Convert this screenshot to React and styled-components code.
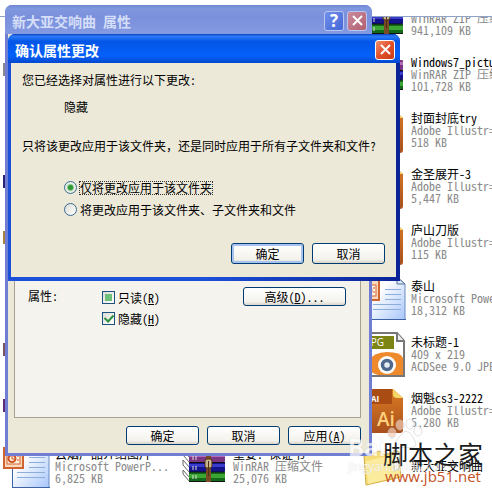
import React from "react";
import styled, { createGlobalStyle } from "styled-components";

const files = [
  { col: 3, row: 1, icon: "rar", name: "Windows7", meta: ["WinRAR ZIP 压缩文件", "941,109 KB"] },
  { col: 3, row: 2, icon: "rar", name: "Windows7_pictures", meta: ["WinRAR ZIP 压缩文件", "101,728 KB"] },
  { col: 3, row: 3, icon: "ai", name: "封面封底try", meta: ["Adobe Illustr=", "518 KB"] },
  { col: 3, row: 4, icon: "ai", name: "金圣展开-3", meta: ["Adobe Illustr=", "5,447 KB"] },
  { col: 3, row: 5, icon: "ai", name: "庐山刀版", meta: ["Adobe Illustr=", "115 KB"] },
  { col: 3, row: 6, icon: "ppt", name: "泰山", meta: ["Microsoft PowerP...", "18,312 KB"] },
  { col: 3, row: 7, icon: "jpg", name: "未标题-1", meta: ["409 x 219", "ACDSee 9.0 JPEG"] },
  { col: 3, row: 8, icon: "ai", name: "烟魁cs3-2222", meta: ["Adobe Illustr=", "5,280 KB"] },
  { col: 3, row: 9, icon: "folder", name: "新大亚交响曲", meta: [] },
  { col: 1, row: 9, icon: "ppt", name: "云烟产品介绍图片", meta: ["Microsoft PowerP...", "6,825 KB"] },
  { col: 2, row: 9, icon: "rar", name: "重要: 保证书", meta: ["WinRAR 压缩文件", "25,076 KB"] },
  { col: 1, row: 2, icon: "badge", color: "#8b8790" },
  { col: 1, row: 4, icon: "badge", color: "#2b2474" },
  { col: 1, row: 5, icon: "badge", color: "#a98242" },
  { col: 1, row: 7, icon: "badge", color: "#7d5560" },
  { col: 1, row: 8, icon: "badge", color: "#5c2a78" },
];

const RarIcon = () => (
  <svg width="48" height="48" viewBox="0 0 48 48">
    <path d="M2 6l7 8v5l-7-8zM2 16l7 8v5l-7-8zM2 26l7 8v4l-7-8z" fill="#fff" stroke="#666" />
    <rect x="8" y="8" width="36" height="10" rx="1" fill="#7d3482" />
    <rect x="8" y="10" width="36" height="3" fill="#b36db8" />
    <rect x="8" y="18" width="36" height="10" rx="1" fill="#12128c" />
    <rect x="8" y="20" width="36" height="3" fill="#3c3ccc" />
    <rect x="8" y="28" width="36" height="10" rx="1" fill="#126a1a" />
    <rect x="8" y="30" width="36" height="4" fill="#3da534" />
    <path d="M8 18.500h36M8 28h36M8 37.500h36" stroke="#111" />
    <path d="M12 12v4M15 12v4M12 22v4M15 22v4M12 31v4M15 31v4" stroke="#ddd" />
    <rect x="25" y="8" width="5" height="30" fill="#7a4a25" />
    <rect x="24" y="15" width="7" height="9" rx="2" fill="#c9b68c" stroke="#4c2c14" />
    <path d="M27.500 17v15" stroke="#513018" />
  </svg>
);

const AiIcon = () => (
  <svg width="48" height="48" viewBox="0 0 48 48">
    <defs>
      <linearGradient id="ai" x1="0" y1="0" x2="0" y2="1">
        <stop offset="0" stopColor="#dc7b22" />
        <stop offset="1" stopColor="#a8501e" />
      </linearGradient>
    </defs>
    <path d="M8 4q0-3 3-3h23l10 9v32q0 3-3 3H11q-3 0-3-3z" fill="url(#ai)" />
    <path d="M8 4q0-3 3-3h22v15H8z" fill="#a84c14" />
    <path d="M34 1l10 9h-6q-4 0-4-4z" fill="#f4d668" />
    <text x="12" y="14" fontSize="8" fontWeight="700" fill="#fff" fontFamily="Open Sans, sans-serif">AI</text>
    <text x="18" y="38" fontSize="19" fontWeight="600" fill="#ffd37c" fontFamily="Open Sans, sans-serif">Ai</text>
  </svg>
);

const PptIcon = () => (
  <svg width="48" height="48" viewBox="0 0 48 48">
    <defs>
      <linearGradient id="ppt" x1="0" y1="0" x2="1" y2="1">
        <stop offset="0.300" stopColor="#fff" />
        <stop offset="1" stopColor="#a8c7fa" />
      </linearGradient>
    </defs>
    <path d="M10 1h28l8 7v35H10z" fill="url(#ppt)" />
    <path d="M10 1h28l8 7v35" fill="none" stroke="#6a8bc4" />
    <path d="M9.500 23v20M9 43.500h38" stroke="#3e62a8" />
    <path d="M38 1v7h8z" fill="#dce9fb" stroke="#55719c" />
    <path d="M26 13.500h16M26 18.500h16M26 23.500h16M14 28.500h28M14 33.500h28" stroke="#8badd8" />
    <rect x="1" y="4" width="19" height="20" fill="#fbd9bd" stroke="#cf6430" strokeWidth="2" />
    <rect x="4" y="9" width="13" height="11" fill="#fff2e4" stroke="#cf6430" />
    <circle cx="9" cy="14.500" r="3.500" fill="none" stroke="#cf5420" strokeWidth="2" />
    <path d="M9 11v4h4M15 11v2M15 15v2" stroke="#cf5420" fill="none" />
  </svg>
);

const JpgIcon = () => (
  <svg width="48" height="48" viewBox="0 0 48 48">
    <path d="M8 1h30l7 8v35H8z" fill="#fff" stroke="#777" strokeWidth="2" />
    <path d="M38 1v8h7" fill="#eee" stroke="#777" strokeWidth="2" />
    <rect x="9" y="4" width="26" height="13" fill="#7c8414" />
    <text x="9" y="14" fontSize="10" fill="#fff" fontFamily="Open Sans, sans-serif">JPG</text>
    <path d="M9 30q5-10 19-10t16 6v17H19q-8-2-10-8z" fill="#ee8a2c" />
    <circle cx="28" cy="33" r="9" fill="#fff" />
    <circle cx="28" cy="33" r="4.500" fill="#e8eef6" stroke="#50688c" strokeWidth="3.500" />
  </svg>
);

const FolderIcon = () => (
  <svg width="48" height="48" viewBox="0 0 48 48">
    <path d="M5 12l16-5 4 4 14-4 3 26-35 8z" fill="#f7dc74" stroke="#d3ae45" />
    <path d="M7 17l32-7 2 22-32 8z" fill="#fbeb9c" />
    <path d="M35 6l6 3-1 16-5 2z" fill="#faf8e8" stroke="#b7b294" />
  </svg>
);

const BadgeIcon = ({ color }) => (
  <svg width="48" height="48" viewBox="0 0 48 48">
    <rect y="11" width="14" height="13" fill={color} />
  </svg>
);

const icons = { rar: RarIcon, ai: AiIcon, ppt: PptIcon, jpg: JpgIcon, folder: FolderIcon, badge: BadgeIcon };

const CloseMark = () => (
  <svg width="13" height="13" viewBox="0 0 13 13">
    <path d="M2 2l9 9M11 2l-9 9" stroke="#fff" strokeWidth="2" />
  </svg>
);

const App = () => {
  return (
    <>
      <GlobalStyle />
      <Desktop>
        <Explorer>
          <FileGrid>
            {files.map((file) => {
              const Icon = icons[file.icon];
              return (
                <Tile key={`${file.col}-${file.row}`} $col={file.col} $row={file.row}>
                  <Icon color={file.color} />
                  {file.name && (
                    <TileText>
                      <FileName>{file.name}</FileName>
                      {file.meta.map((line) => (
                        <FileMeta key={line}>{line}</FileMeta>
                      ))}
                    </TileText>
                  )}
                </Tile>
              );
            })}
          </FileGrid>
        </Explorer>

        <PropertiesWindow>
          <TitleBar $inactive>
            <Title $inactive>新大亚交响曲 属性</Title>
            <TitleButton $inactive $help aria-label="帮助">
              ?
            </TitleButton>
            <TitleButton $inactive aria-label="关闭">
              <CloseMark />
            </TitleButton>
          </TitleBar>
          <PropertiesBody>
            <TabPanel>
              <Attributes>
                <span>属性:</span>
                <Checks>
                  <Option>
                    <Checkbox type="checkbox" $mixed />
                    <span>
                      只读(<u>R</u>)
                    </span>
                  </Option>
                  <Option>
                    <Checkbox type="checkbox" defaultChecked />
                    <span>
                      隐藏(<u>H</u>)
                    </span>
                  </Option>
                </Checks>
                <Button $wide>
                  高级(<u>D</u>)...
                </Button>
              </Attributes>
            </TabPanel>
            <Buttons>
              <Button>确定</Button>
              <Button>取消</Button>
              <Button>
                应用(<u>A</u>)
              </Button>
            </Buttons>
          </PropertiesBody>
        </PropertiesWindow>

        <ConfirmWindow>
          <TitleBar>
            <Title>确认属性更改</Title>
            <TitleButton aria-label="关闭">
              <CloseMark />
            </TitleButton>
          </TitleBar>
          <ConfirmBody>
            <Message>您已经选择对属性进行以下更改:</Message>
            <Change>隐藏</Change>
            <Message>只将该更改应用于该文件夹，还是同时应用于所有子文件夹和文件?</Message>
            <Radios>
              <Option>
                <Radio type="radio" name="scope" defaultChecked />
                <Focused>仅将更改应用于该文件夹</Focused>
              </Option>
              <Option>
                <Radio type="radio" name="scope" />
                <span>将更改应用于该文件夹、子文件夹和文件</span>
              </Option>
            </Radios>
            <Buttons $tall>
              <Button $primary>确定</Button>
              <Button>取消</Button>
            </Buttons>
          </ConfirmBody>
        </ConfirmWindow>

        <BaiduMark>
          <svg width="40" height="36" viewBox="0 0 40 36">
            <g fill="#fff" stroke="#d8d4d8">
              <ellipse cx="7" cy="18" rx="4" ry="5" fill="#f3cdb8" />
              <ellipse cx="15" cy="10" rx="4" ry="5" fill="#f3cdb8" />
              <ellipse cx="25" cy="9" rx="4" ry="5" />
              <ellipse cx="33" cy="16" rx="4" ry="5" />
              <path d="M20 16q5 0 8 6t3 8q-3 4-11 2-8 2-10-2 0-4 4-8t6-6z" />
            </g>
          </svg>
          <BaiduName>Bai</BaiduName>
          <BaiduSite>jingyan.baidu.com</BaiduSite>
        </BaiduMark>
        <SiteMark>
          <SiteName>脚本之家</SiteName>
          <SiteLink href="#">www.jb51.net</SiteLink>
        </SiteMark>
      </Desktop>
    </>
  );
};

const GlobalStyle = createGlobalStyle`
  * {
    box-sizing: border-box;
  }

  body {
    margin: 0;
    background: #fff;
    font-family: "Noto Sans Mono CJK SC", "Noto Sans CJK SC", sans-serif;
    font-size: 12px;
    line-height: 12px;
    color: #000;
  }
`;

const Desktop = styled.main`
  position: relative;
  height: 100vh;
  overflow: hidden;
`;

const Explorer = styled.section`
  margin-top: 16px;
  border-top: 1px solid #8fa3c8;
  overflow: hidden;
`;

const FileGrid = styled.div`
  display: grid;
  grid-template-columns: repeat(3, 178px);
  grid-auto-rows: 56px;
  margin: -21px 0 0 3px;
`;

const Tile = styled.div`
  grid-column: ${(props) => props.$col};
  grid-row: ${(props) => props.$row};
  display: flex;
  align-items: flex-start;
  gap: 4px;
  min-width: 0;

  svg {
    flex: none;
  }
`;

const TileText = styled.div`
  display: flex;
  flex-direction: column;
  justify-content: center;
  height: 44px;
  white-space: nowrap;
`;

const FileName = styled.div`
  color: #000;
`;

const FileMeta = styled.div`
  color: #8a8a8a;
`;

const Window = styled.section`
  position: absolute;
  display: flex;
  flex-direction: column;
  border-radius: 7px 7px 0 0;
`;

const PropertiesWindow = styled(Window)`
  top: 5px;
  left: 5px;
  right: 120px;
  background: #6f7ed2;
`;

const ConfirmWindow = styled(Window)`
  top: 34px;
  left: 8px;
  right: 92px;
  background: linear-gradient(90deg, #1c50d8 50%, #0a2396);
`;

const TitleBar = styled.header`
  display: flex;
  align-items: center;
  gap: 3px;
  height: 29px;
  padding: 2px 5px 0 7px;
  border-radius: 7px 7px 0 0;
  background: ${(props) =>
    props.$inactive
      ? "linear-gradient(#6f86d4, #8098de 12%, #7a90dc 40%, #8399e0)"
      : "linear-gradient(#0a3fc0, #2b7bf8 8%, #0356e6 25%, #0560fb 75%, #0348cc)"};
`;

const Title = styled.h1`
  flex: 1;
  margin: 0;
  font-size: 14px;
  line-height: 18px;
  font-weight: 700;
  color: ${(props) => (props.$inactive ? "#d5def8" : "#fff")};
`;

const TitleButton = styled.button`
  display: flex;
  align-items: center;
  justify-content: center;
  width: 20px;
  height: 20px;
  padding: 0;
  border: 1px solid ${(props) => (props.$inactive ? "#b9c6f2" : "#fff")};
  border-radius: 3px;
  background: ${(props) => {
    if (props.$help) return "linear-gradient(135deg, #7390ea, #4166d6)";
    return props.$inactive
      ? "linear-gradient(135deg, #c98a9c, #b2606f)"
      : "linear-gradient(135deg, #f0906e, #e2502a 50%, #c83c14)";
  }};
  color: #fff;
  font: 700 17px/18px "Open Sans", sans-serif;
`;

const PropertiesBody = styled.div`
  margin: 0 3px 3px;
  padding: 6px 8px 8px 6px;
  background: #ece9d8;
`;

const TabPanel = styled.div`
  padding: 246px 14px 92px 13px;
  border: 1px solid #a5a294;
  background: #f4f3ee;
`;

const Attributes = styled.div`
  display: grid;
  grid-template-columns: 74px 1fr auto;
  align-items: start;

  > span {
    padding-top: 3px;
  }
`;

const Checks = styled.div`
  display: flex;
  flex-direction: column;
  gap: 8px;
  padding-top: 4px;
`;

const Option = styled.label`
  display: flex;
  align-items: center;
  gap: 3px;
  height: 13px;
`;

const Checkbox = styled.input`
  appearance: none;
  display: grid;
  place-items: center;
  width: 13px;
  height: 13px;
  margin: 0;
  border: 1px solid #1c5180;
  background: linear-gradient(135deg, #dcdcd7, #fff);

  &::before {
    content: "";
    width: 7px;
    height: 7px;
    background: ${(props) => (props.$mixed ? "#6cc07a" : "none")};
  }

  &:checked::before {
    width: 4px;
    height: 7px;
    margin-bottom: 2px;
    border: solid #2f8f3c;
    border-width: 0 2px 2px 0;
    transform: rotate(42deg);
  }
`;

const Radio = styled.input`
  appearance: none;
  width: 13px;
  height: 13px;
  margin: 0;
  border: 1px solid #3d6a92;
  border-radius: 50%;
  background: linear-gradient(135deg, #dcdcd7, #fff);

  &:checked {
    background: radial-gradient(circle, #2f9a35 0 2px, #e6efe2 4px);
  }
`;

const Button = styled.button`
  width: ${(props) => (props.$wide ? "103px" : "73px")};
  height: 19px;
  padding: 0;
  border: 1px solid #003c74;
  border-radius: 3px;
  background: linear-gradient(#fff, #f3f2ec 80%, #d9d4c8);
  box-shadow: ${(props) => (props.$primary ? "inset 0 0 0 2px #a9c3f0" : "none")};
  font: inherit;
  color: #000;
`;

const Buttons = styled.div`
  display: flex;
  justify-content: flex-end;
  gap: 8px;
  padding-top: ${(props) => (props.$tall ? "0" : "8px")};

  ${Button} {
    height: ${(props) => (props.$tall ? "21px" : "19px")};
  }
`;

const ConfirmBody = styled.div`
  margin: 0 4px 4px 3px;
  padding: 11px 11px 13px;
  background: #ece9d8;
`;

const Message = styled.p`
  margin: 0;
  white-space: nowrap;
`;

const Change = styled.p`
  margin: 15px 0 27px 42px;
`;

const Radios = styled.div`
  display: flex;
  flex-direction: column;
  gap: 9px;
  margin: 29px 0 27px 42px;
`;

const Focused = styled.span`
  outline: 1px dotted #333;
`;

const BaiduMark = styled.div`
  position: absolute;
  right: 40px;
  bottom: 17px;
  width: 104px;
  color: #fff;
  font-family: "Open Sans", sans-serif;
  text-shadow: 0 0 1px #c4c0c4;
  opacity: 0.7;

  svg {
    display: block;
    margin: 0 0 -16px 37px;
  }
`;

const BaiduName = styled.div`
  font-size: 24px;
  line-height: 24px;
  font-weight: 700;
`;

const BaiduSite = styled.div`
  font-size: 12px;
  line-height: 16px;
`;

const SiteMark = styled.div`
  position: absolute;
  right: 9px;
  bottom: 7px;
  display: flex;
  flex-direction: column;
  align-items: center;
`;

const SiteName = styled.strong`
  font: 400 25px/28px "Noto Sans CJK SC", sans-serif;
  color: #1c1c1c;
`;

const SiteLink = styled.a`
  font: 15px/18px "Open Sans", sans-serif;
  color: #c4521f;
  text-decoration: none;
`;

export default App;
